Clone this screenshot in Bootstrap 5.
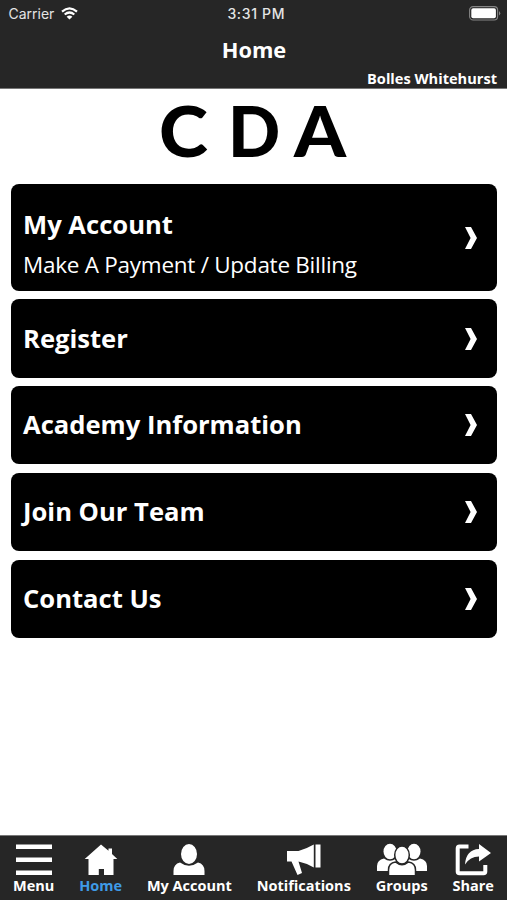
<!DOCTYPE html>
<html lang="en">
<head>
<meta charset="utf-8">
<meta name="viewport" content="width=device-width, initial-scale=1">
<title>Home</title>
<link href="https://cdn.jsdelivr.net/npm/bootstrap@5.3.0/dist/css/bootstrap.min.css" rel="stylesheet">
<style>
body{font-family:"Open Sans","Noto Sans",sans-serif;color:#fff;height:900px;overflow:hidden}
.topbar{background:#262626;height:89px;border-bottom:1px solid #777}
.status{height:27px;padding:0 6px 0 8.5px;font:14px/27px Inter,sans-serif;color:#e4e4e4}
.status>div{flex:1 1 0}
.carrier svg{margin-left:7px}
.clock{font-weight:500;letter-spacing:.65px;padding-left:3px}
.page-title{font-size:21.8px;font-weight:700;line-height:30px;margin-top:8px;padding-left:1px}
.user{font-size:14.6px;font-weight:700;line-height:18px;padding-right:10px;margin-top:4px}
.logo{height:95.4px;color:#000;font:900 70px/82px Lato,sans-serif;padding-left:159px}
.logo span{display:block;transform-origin:left}
.letter-c{transform:scaleX(1.06)}
.letter-d{margin-left:22.5px;transform:scaleX(.98)}
.letter-a{margin-left:13px;transform:scaleX(1.06)}
.tiles{padding:0 10px 0 11px;gap:8.6px}
.tile{background:#000;border-radius:8px;height:78.1px;padding:0 20px 0 12px;color:#fff;text-decoration:none}
.tile.tall{height:106.5px}
.tile-title{font-size:25.6px;font-weight:700;line-height:36px}
.tall .tile-title{margin-top:13px}
.tile-sub{font-size:22.5px;letter-spacing:-.26px;line-height:32px;margin-top:6px}
.tabs{background:#262626;height:65px;border-top:1px solid #777;font-size:14.5px;font-weight:700;line-height:16px;padding:0 13px}
.tab-link{color:#fff;text-decoration:none;padding-top:7px;white-space:nowrap}
.tab-link.on{color:#3f9be6}
.tab-link svg{margin-bottom:1px}
</style>
</head>
<body class="d-flex flex-column bg-white">
<header class="topbar flex-shrink-0">
  <div class="status d-flex align-items-center">
    <div class="carrier d-flex align-items-center">Carrier
      <svg width="17" height="13" viewBox="0 0 17 13" fill="none" stroke="#fff" stroke-width="2.2"><path d="M1 4.600Q8.500-1.800 16 4.600M3.700 7.500Q8.500 3.500 13.300 7.500"/><path d="M8.500 12.500L5.600 9.700Q8.500 7.400 11.400 9.700Z" fill="#fff" stroke="none"/></svg>
    </div>
    <div class="text-center"><span class="clock">3:31 PM</span></div>
    <div class="d-flex justify-content-end"><svg width="32" height="15" viewBox="0 0 32 15"><rect x=".6" y=".6" width="28" height="13.400" rx="3.500" fill="none" stroke="#858585" stroke-width="1.100"/><rect x="2.300" y="2.300" width="24.600" height="10" rx="1.800" fill="#fff"/><path d="M30 5Q32.500 7.300 30 9.600Z" fill="#858585"/></svg></div>
  </div>
  <div class="page-title text-center">Home</div>
  <div class="user text-end">Bolles Whitehurst</div>
</header>
<main class="flex-grow-1">
  <div class="logo d-flex"><span class="letter-c">C</span><span class="letter-d">D</span><span class="letter-a">A</span></div>
  <div class="tiles d-flex flex-column">
    <a class="tile tall d-flex align-items-center justify-content-between" href="#"><div><div class="tile-title">My Account</div><div class="tile-sub">Make A Payment / Update Billing</div></div><svg width="12" height="22" viewBox="0 0 12 22"><path d="M0 0H6L12 11L6 22H0L5.600 11Z" fill="#fff"/></svg></a>
    <a class="tile d-flex align-items-center justify-content-between" href="#"><div class="tile-title">Register</div><svg width="12" height="22" viewBox="0 0 12 22"><path d="M0 0H6L12 11L6 22H0L5.600 11Z" fill="#fff"/></svg></a>
    <a class="tile d-flex align-items-center justify-content-between" href="#"><div class="tile-title">Academy Information</div><svg width="12" height="22" viewBox="0 0 12 22"><path d="M0 0H6L12 11L6 22H0L5.600 11Z" fill="#fff"/></svg></a>
    <a class="tile d-flex align-items-center justify-content-between" href="#"><div class="tile-title">Join Our Team</div><svg width="12" height="22" viewBox="0 0 12 22"><path d="M0 0H6L12 11L6 22H0L5.600 11Z" fill="#fff"/></svg></a>
    <a class="tile d-flex align-items-center justify-content-between" href="#"><div class="tile-title">Contact Us</div><svg width="12" height="22" viewBox="0 0 12 22"><path d="M0 0H6L12 11L6 22H0L5.600 11Z" fill="#fff"/></svg></a>
  </div>
</main>
<nav class="tabs d-flex justify-content-between flex-shrink-0">
  <a class="tab-link d-flex flex-column align-items-center" href="#"><svg width="36" height="34" viewBox="0 0 36 34" fill="#fff"><path d="M0 1.500h36v4.500H0zM0 14.500h36V19H0zM0 27.500h36V32H0z"/></svg>Menu</a>
  <a class="tab-link on d-flex flex-column align-items-center" href="#"><svg width="34" height="34" viewBox="0 0 34 34" fill="#fff"><path d="M17 1.500L24.500 7.800V5.500H28V11L33.300 16H29.500V32H20V26H14.800V32H4.500V16H.7Z"/></svg>Home</a>
  <a class="tab-link d-flex flex-column align-items-center" href="#"><svg width="34" height="34" viewBox="0 0 34 34" fill="#fff"><ellipse cx="17" cy="11" rx="8" ry="10"/><path d="M1.500 32V28Q1.500 21 8 19.500Q17 26 26 19.500Q32.500 21 32.500 28V32Z"/></svg>My Account</a>
  <a class="tab-link d-flex flex-column align-items-center" href="#"><svg width="35" height="34" viewBox="0 0 35 34" fill="#fff"><path d="M1 8H12.500Q20 6 27.800 1.500V24.500Q20 20 12.500 18.500L16 30L11.500 32L5.500 18.500H1ZM29.500 1.500H34.500V24.500H29.500Z"/></svg>Notifications</a>
  <a class="tab-link d-flex flex-column align-items-center" href="#"><svg width="50" height="34" viewBox="0 0 50 34" fill="#fff"><ellipse cx="13" cy="8.500" rx="6.500" ry="7.800"/><ellipse cx="37" cy="8.500" rx="6.500" ry="7.800"/><path d="M0 28V23Q0 17 7 15.500Q13 20 19 15.500V28ZM50 28V23Q50 17 43 15.500Q37 20 31 15.500V28Z"/><g stroke="#262626" stroke-width="1.500"><ellipse cx="25" cy="12" rx="7.300" ry="9"/><path d="M11.500 32.700V27Q11.500 20 18.500 19Q25 24.500 31.500 19Q38.500 20 38.500 27V32.700Z"/></g></svg>Groups</a>
  <a class="tab-link d-flex flex-column align-items-center" href="#"><svg width="36" height="34" viewBox="0 0 36 34"><path d="M13.500 3.500H4.500Q2.700 3.500 2.700 5.500V28.500Q2.700 30.300 4.500 30.300H28.500Q30.300 30.300 30.300 28.500V22" fill="none" stroke="#fff" stroke-width="4"/><path d="M10 21.500Q11 6.500 24 6V1L36 10L24 18.500V13.500Q15 13.500 10 21.500Z" fill="#fff"/></svg>Share</a>
</nav>
<script src="https://cdn.jsdelivr.net/npm/bootstrap@5.3.0/dist/js/bootstrap.bundle.min.js"></script>
</body>
</html>
